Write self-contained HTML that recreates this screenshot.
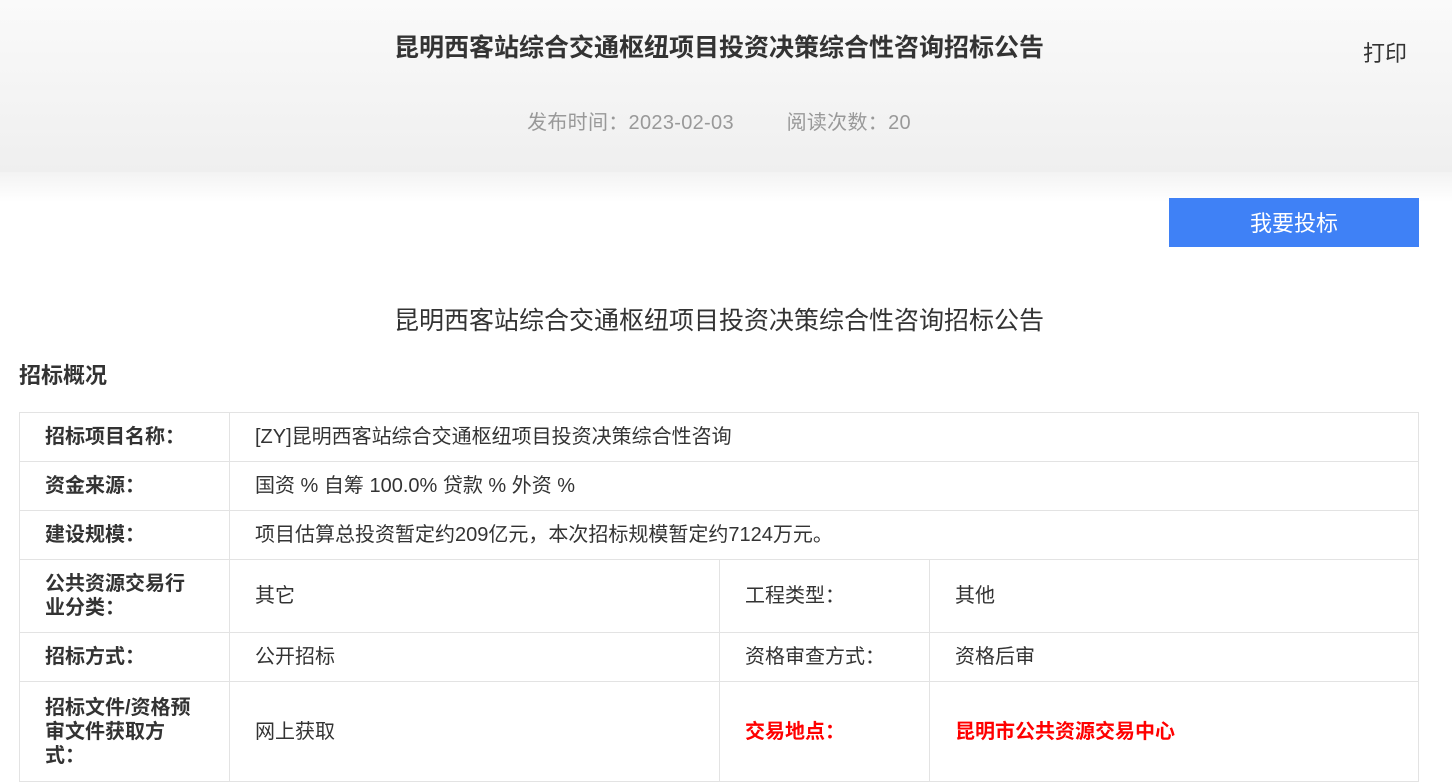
<!DOCTYPE html>
<html><head><meta charset="utf-8"><style>
body{margin:0;width:1452px;height:762px;overflow:hidden;background:#fff;font-family:"Liberation Sans","Noto Sans CJK SC",sans-serif;color:#333;position:relative}
.hd{position:absolute;left:0;top:0;width:1452px;height:172px;background:linear-gradient(#fafafa,#efefef)}
.sh{position:absolute;left:0;top:172px;width:1452px;height:30px;background:linear-gradient(#f3f3f3,#fff)}
.t1{position:absolute;left:0;width:1438px;top:31px;text-align:center;font-size:25px;font-weight:bold;color:#333;line-height:34px}
.pr{position:absolute;left:1363px;top:36px;font-size:22px;color:#333}
.meta{position:absolute;left:0;width:1438px;top:106px;text-align:center;font-size:20px;color:#999;letter-spacing:0.3px}
.btn{position:absolute;left:1169px;top:198px;width:250px;height:49px;background:#3f81f6;color:#fff;font-size:22px;text-align:center;line-height:51px}
.t2{position:absolute;left:0;width:1438px;top:301px;text-align:center;font-size:25px;color:#333}
.sec{position:absolute;left:19px;top:358px;font-size:22px;font-weight:bold;color:#333}
table{position:absolute;left:19px;top:412px;border-collapse:collapse;font-size:20px;table-layout:fixed}
td{border:1px solid #e3e3e3;padding:0 0 0 25px;line-height:24px;vertical-align:middle}
td.k{font-weight:bold;padding-left:25px;padding-right:30px}
.red{color:#f00;font-weight:bold}
</style></head><body>
<div class="hd"></div><div class="sh"></div>
<div class="t1">昆明西客站综合交通枢纽项目投资决策综合性咨询招标公告</div>
<div class="pr">打印</div>
<div class="meta">发布时间：2023-02-03&nbsp;&nbsp;&nbsp;&nbsp;&nbsp;&nbsp;&nbsp;&nbsp;&nbsp;阅读次数：20</div>
<div class="btn">我要投标</div>
<div class="t2">昆明西客站综合交通枢纽项目投资决策综合性咨询招标公告</div>
<div class="sec">招标概况</div>
<table>
<colgroup><col style="width:210px"><col style="width:490px"><col style="width:210px"><col style="width:489px"></colgroup>
<tr style="height:49px"><td class="k">招标项目名称：</td><td colspan="3">[ZY]昆明西客站综合交通枢纽项目投资决策综合性咨询</td></tr>
<tr style="height:49px"><td class="k">资金来源：</td><td colspan="3">国资 % 自筹 100.0% 贷款 % 外资 %</td></tr>
<tr style="height:49px"><td class="k">建设规模：</td><td colspan="3">项目估算总投资暂定约209亿元，本次招标规模暂定约7124万元。</td></tr>
<tr style="height:73px"><td class="k">公共资源交易行业分类：</td><td>其它</td><td>工程类型：</td><td>其他</td></tr>
<tr style="height:49px"><td class="k">招标方式：</td><td>公开招标</td><td>资格审查方式：</td><td>资格后审</td></tr>
<tr style="height:100px"><td class="k">招标文件/资格预审文件获取方式：</td><td>网上获取</td><td class="red">交易地点：</td><td class="red">昆明市公共资源交易中心</td></tr>
</table>
</body></html>
